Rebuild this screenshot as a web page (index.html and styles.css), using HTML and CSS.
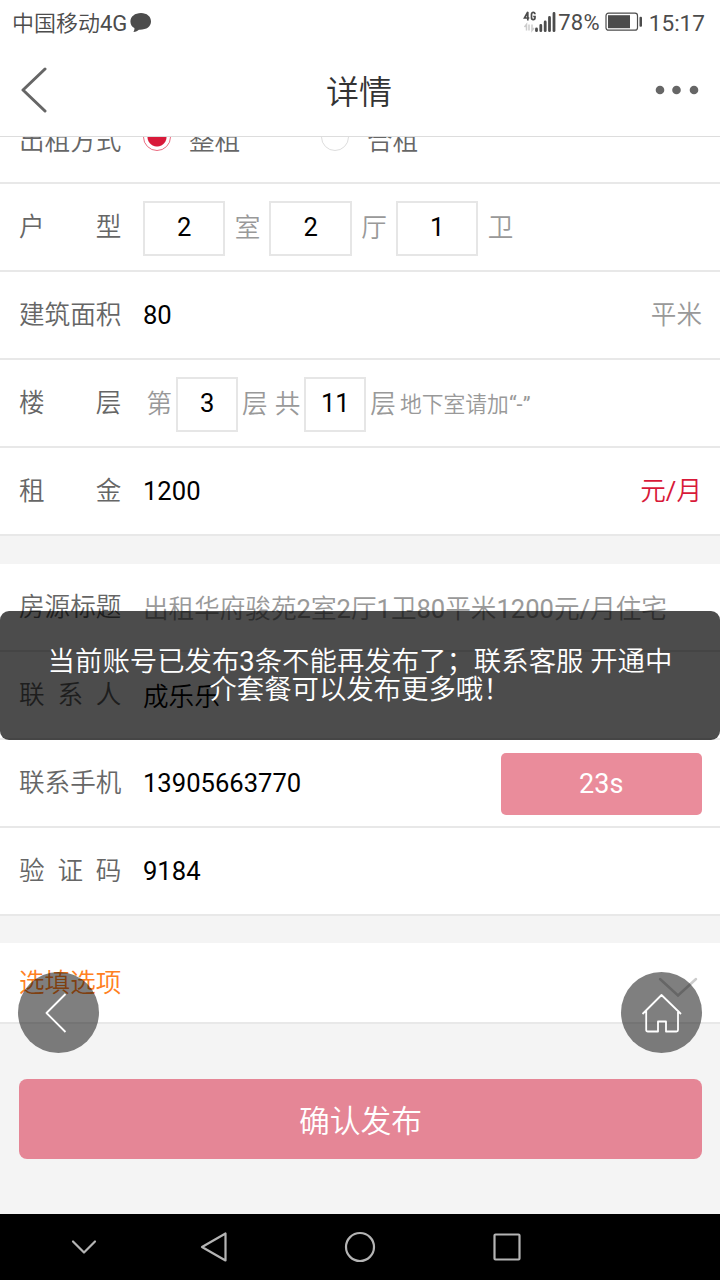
FILE: index.html
```html
<!DOCTYPE html>
<html lang="zh-CN">
<head>
<meta charset="utf-8">
<title>详情</title>
<link rel="stylesheet" href="styles.css">
</head>
<body>
<div class="screen">
  <div class="status">
    <span class="carrier">中国移动4G</span>
    <svg class="chat" width="22" height="21" viewBox="0 0 22 21"><path d="M11 1C5 1 .4 4.500 .4 9.500c0 3 1.500 5.200 4 6.600.2 1.500-.2 2.700-1 3.900 2.500-.2 4.300-1.100 5.500-2.300C16.500 18 21 14.500 21 9.500 21 4.500 16.800 1 11 1z" fill="#4c4c4c"/></svg>
    <span class="spacer"></span>
    <svg class="signal" width="34" height="24" viewBox="0 0 34 24">
      <g fill="none" stroke="#4c4c4c" stroke-width="1.700"><path d="M4.800 10.500V2L1.500 8H6.300M12 4.200C12 1.700 8.500 1.700 8.500 4.200V7.800C8.500 10.300 12 10.300 12 7.800V6.500H10.200"/></g>
      <path d="M3.500 20.500V14.500L1.500 17M6 14.500V20.500M9 14.500V20.500L11 18" fill="none" stroke="#ccc" stroke-width="1.500"/>
      <path d="M13.500 19V20.700M17.800 15.500V20.700M22.200 12V20.700M26.500 7.500V20.700M31 3.500V20.700" stroke="#4c4c4c" stroke-width="2.800" stroke-linecap="round"/>
    </svg>
    <span class="percent">78%</span>
    <svg class="battery" width="38" height="20" viewBox="0 0 38 20"><rect x="1" y="1.200" width="31.500" height="17" rx="2.500" fill="none" stroke="#4c4c4c" stroke-width="1.200"/><rect x="3" y="3.200" width="22" height="13" fill="#4c4c4c"/><rect x="34.500" y="4.800" width="2.500" height="10" rx="1" fill="#4c4c4c"/></svg>
    <span class="clock">15:17</span>
  </div>

  <header class="header">
    <svg class="back" width="28" height="46" viewBox="0 0 28 46"><path d="M25 2L3 23L25 44" fill="none" stroke="#666" stroke-width="3" stroke-linecap="round" stroke-linejoin="round"/></svg>
    <h1 class="title">详情</h1>
    <svg class="more" width="44" height="10" viewBox="0 0 44 10" fill="#666"><circle cx="5" cy="5" r="4.300"/><circle cx="21.500" cy="5" r="4.300"/><circle cx="39" cy="5" r="4.300"/></svg>
  </header>

  <main class="scroll">
    <section class="group first">
      <div class="row top"><span class="label">出租方式</span>
        <div class="field modes">
          <span class="radio on"></span><span class="mode">整租</span>
          <span class="radio"></span><span class="mode">合租</span>
        </div>
      </div>
      <div class="row"><span class="label">户型</span>
        <div class="field rooms"><span class="box">2</span><span class="unit">室</span><span class="box">2</span><span class="unit">厅</span><span class="box">1</span><span class="unit">卫</span></div>
      </div>
      <div class="row"><span class="label">建筑面积</span><div class="field">80</div><span class="unit">平米</span></div>
      <div class="row"><span class="label">楼层</span>
        <div class="field floor"><span class="unit">第</span><span class="box small">3</span><span class="unit">层</span><span class="unit total">共</span><span class="box small">11</span><span class="unit">层</span><span class="hint">地下室请加“-”</span></div>
      </div>
      <div class="row"><span class="label">租金</span><div class="field">1200</div><span class="price">元/月</span></div>
    </section>

    <section class="group">
      <div class="row"><span class="label">房源标题</span><div class="field placeholder">出租华府骏苑2室2厅1卫80平米1200元/月住宅</div></div>
      <div class="row"><span class="label">联系人</span><div class="field name">成乐乐</div></div>
      <div class="row"><span class="label">联系手机</span><div class="field">13905663770</div><span class="timer">23s</span></div>
      <div class="row"><span class="label">验证码</span><div class="field">9184</div></div>
    </section>

    <section class="optional">
      <span class="optional-title">选填选项</span>
      <svg class="down" width="40" height="22" viewBox="0 0 40 22"><path d="M2 2L20 18.500L38 2" fill="none" stroke="#ccc" stroke-width="2.500" stroke-linecap="round"/></svg>
    </section>
    <div class="submit">确认发布</div>
  </main>

  <nav class="nav">
    <svg width="26" height="16" viewBox="0 0 26 16"><path d="M2 2.500L13 13.500L24 2.500"/></svg>
    <svg width="28" height="32" viewBox="0 0 28 32"><path d="M25.500 2.500V29.500L2 16Z"/></svg>
    <svg width="32" height="32" viewBox="0 0 32 32"><circle cx="16" cy="16" r="14"/></svg>
    <svg width="28" height="28" viewBox="0 0 28 28"><rect x="1.500" y="1.500" width="25" height="25" rx="1"/></svg>
  </nav>

  <div class="float float-back"><svg width="81" height="81" viewBox="0 0 81 81"><path d="M47.500 22L28.500 41L47.500 60"/></svg></div>
  <div class="float float-home"><svg width="81" height="81" viewBox="0 0 81 81"><path d="M21.500 42L40.500 23L60 42M25.200 39V58Q25.200 59.500 27 59.500H37V49.500H45V59.500H55.500Q57 59.500 57 58V39"/></svg></div>
  <div class="toast">当前账号已发布3条不能再发布了；联系客服 开通中<br>介套餐可以发布更多哦！</div>
</div>
</body>
</html>
```
FILE: styles.css
```css
* { box-sizing: border-box; }
body {
  margin: 0;
  font-family: Roboto, "Noto Sans CJK SC DemiLight", "Noto Sans CJK SC", sans-serif;
  font-weight: 400;
  font-size: 25.6px;
  color: #000;
}
.screen {
  position: relative;
  width: 720px;
  height: 1280px;
  display: flex;
  flex-direction: column;
  overflow: hidden;
  background: #f4f4f4;
}
svg { display: block; flex: none; }
.status {
  height: 45px;
  flex: none;
  display: flex;
  align-items: center;
  padding: 0 15px 0 12px;
  background: #fff;
  color: #4c4c4c;
  font-size: 22px;
  line-height: 44px;
}
.carrier { padding-top: 2px; }
.chat { margin-left: 3px; }
.spacer { flex: 1; }
.signal { margin: -2px 1px 0 0; }
.percent { letter-spacing: .2px; }
.battery { margin: -1px 6px 0 5px; }
.clock { font-size: 22.6px; padding-top: 2px; }
.header {
  height: 92px;
  flex: none;
  display: flex;
  align-items: center;
  justify-content: space-between;
  padding: 0 21px 2px 20px;
  background: #fff;
  border-bottom: 1px solid #ddd;
}
.title {
  margin: 7px 0 0 15px;
  font-size: 33px;
  font-weight: 400;
  line-height: 48px;
  color: #333;
}
.scroll { flex: 1; min-height: 0; overflow: hidden; }
.group { margin-bottom: 28px; background: #fff; }
.group.first { margin-top: -41px; }
.group + .optional { margin-top: -1px; }
.row {
  height: 88px;
  display: flex;
  align-items: center;
  padding: 0 18px 0 19px;
  border-bottom: 2px solid #e8e8e8;
  line-height: 38px;
}
.row.top { padding-top: 3px; }
.label {
  width: 102.4px;
  margin-right: 21.6px;
  flex: none;
  color: #666;
  text-align: justify;
  text-align-last: justify;
}
.field { flex: 1; white-space: nowrap; }
.modes, .rooms, .floor { display: flex; align-items: center; }
.radio {
  width: 28px;
  height: 28px;
  margin: -8px 18px 0 0;
  border: 1.5px solid #ddd;
  border-radius: 50%;
  flex: none;
}
.radio.on {
  border-color: #ea6b80;
  background: radial-gradient(circle, #d81939 9px, #fff 10px);
}
.mode { width: 132px; color: #666; }
.box {
  width: 82.500px;
  height: 55px;
  border: 2px solid #e6e6e6;
  line-height: 48px;
  text-align: center;
}
.rooms, .floor { padding-top: 3px; }
.unit { color: #999; }
.rooms .unit { width: 44px; text-align: center; }
.rooms .unit, .floor .unit { margin-top: -2px; }
.box.small { width: 62px; margin: 0 4px; }
.floor .unit:first-child { margin-left: 3.500px; }
.floor .total { margin-left: 7px; }
.hint { margin: 1px 0 0 4px; font-size: 21.8px; color: #999; }
.price { color: #d81939; }
.placeholder { color: #999; padding-top: 3px; }
.name { padding-top: 3px; }
.timer {
  width: 201.500px;
  height: 62px;
  margin-top: 1px;
  border-radius: 5px;
  background: #ea8c9b;
  color: #fff;
  font-size: 27px;
  line-height: 63px;
  text-align: center;
}
.optional {
  height: 81px;
  display: flex;
  align-items: center;
  justify-content: space-between;
  padding: 0 22px 4px 19px;
  background: #fff;
  border-bottom: 2px solid #e8e8e8;
}
.optional-title { color: #ff8022; }
.down { margin-top: 14px; }
.submit {
  height: 80px;
  margin: 55px 18px 0 19px;
  border-radius: 8px;
  background: #e58696;
  color: #fff;
  font-size: 30.8px;
  line-height: 86px;
  text-align: center;
}
.nav {
  height: 66px;
  flex: none;
  display: grid;
  grid-template-columns: 138px 121px 172px 122px;
  align-items: center;
  justify-items: center;
  padding-left: 15px;
  background: #000;
}
.nav svg { fill: none; stroke: #b4b4b4; stroke-width: 2.200; stroke-linejoin: round; stroke-linecap: round; }
.float {
  position: absolute;
  top: 972px;
  width: 81px;
  height: 81px;
  border-radius: 50%;
  background: rgba(0, 0, 0, .5);
}
.float svg { fill: none; stroke: #fff; stroke-width: 1.800; stroke-linejoin: round; }
.float-back { left: 18px; }
.float-home { left: 621px; }
.toast {
  position: absolute;
  left: 0;
  top: 611px;
  width: 720px;
  height: 129px;
  padding-top: 37px;
  border-radius: 9px;
  background: rgba(0, 0, 0, .7);
  color: #fff;
  font-size: 27.400px;
  line-height: 28px;
  text-align: center;
  white-space: nowrap;
}
```
